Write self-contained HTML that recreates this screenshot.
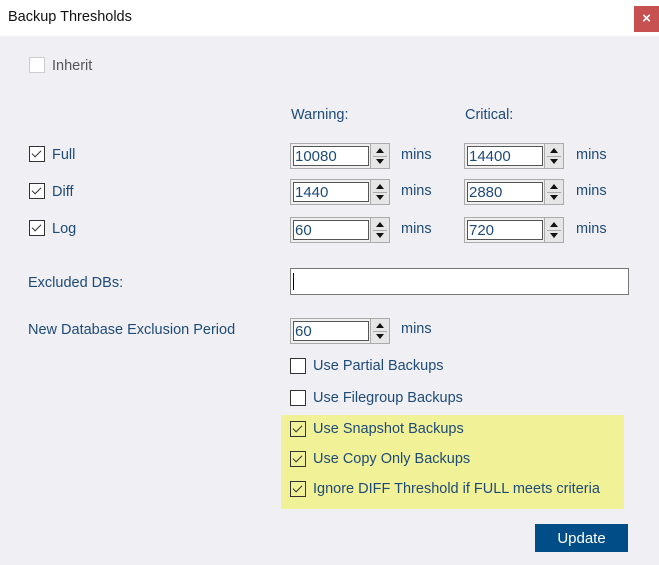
<!DOCTYPE html>
<html><head><style>
body{margin:0;width:659px;height:565px;background:#f0f0f4;font-family:"Liberation Sans",sans-serif;font-size:14.5px;color:#1e4a78;position:relative;overflow:hidden}
.a{position:absolute;white-space:nowrap}
.cb{position:absolute;width:14px;height:14px;border:1px solid #333;background:#fff}
.cb.c::after{content:"";position:absolute;left:4px;top:1px;width:4px;height:8px;border:solid #333;border-width:0 1.5px 1.5px 0;transform:rotate(45deg)}
.in{position:absolute;width:79px;height:24px;border:1px solid #aaa;background:#f0f0f0}
.in div{position:absolute;left:2px;top:2px;width:73px;height:18px;border:1px solid #555;background:#fff;color:#1e4a78;font-size:15px;line-height:19px;padding-left:1px;box-sizing:content-box}
.sp{position:absolute;width:18px;height:24px;border:1px solid #aaa;background:#e6e6e6}
.sp::before{content:"";position:absolute;left:5px;top:4px;border:4px solid transparent;border-bottom:5px solid #111;border-top:0}
.sp::after{content:"";position:absolute;left:5px;top:15px;border:4px solid transparent;border-top:5px solid #111;border-bottom:0}
.sp i{position:absolute;left:2px;right:2px;top:12px;height:1px;background:#aaa}
</style></head><body>
<div class="a" style="left:0;top:0;width:659px;height:36px;background:#fff"></div>
<div class="a" style="left:8px;top:9px;color:#111;font-size:14.5px">Backup Thresholds</div>
<div class="a" style="left:634px;top:6px;width:25px;height:26px;background:#c75050;color:#fff;text-align:center;line-height:25px;font-size:15px;font-weight:bold">×</div>

<div class="cb" style="left:29px;top:57px;border-color:#ccc"></div>
<div class="a" style="left:52px;top:58px;color:#555">Inherit</div>

<div class="a" style="left:291px;top:107px">Warning:</div>
<div class="a" style="left:465px;top:107px">Critical:</div>

<div class="cb c" style="left:29px;top:146px"></div><div class="a" style="left:52px;top:147px">Full</div>
<div class="cb c" style="left:29px;top:183px"></div><div class="a" style="left:52px;top:184px">Diff</div>
<div class="cb c" style="left:29px;top:220px"></div><div class="a" style="left:52px;top:221px">Log</div>

<div class="in" style="left:290px;top:143px"><div>10080</div></div><div class="sp" style="left:370px;top:143px"><i></i></div><div class="a" style="left:401px;top:147px">mins</div>
<div class="in" style="left:464px;top:143px"><div>14400</div></div><div class="sp" style="left:544px;top:143px"><i></i></div><div class="a" style="left:576px;top:147px">mins</div>
<div class="in" style="left:290px;top:179px"><div>1440</div></div><div class="sp" style="left:370px;top:179px"><i></i></div><div class="a" style="left:401px;top:183px">mins</div>
<div class="in" style="left:464px;top:179px"><div>2880</div></div><div class="sp" style="left:544px;top:179px"><i></i></div><div class="a" style="left:576px;top:183px">mins</div>
<div class="in" style="left:290px;top:217px"><div>60</div></div><div class="sp" style="left:370px;top:217px"><i></i></div><div class="a" style="left:401px;top:221px">mins</div>
<div class="in" style="left:464px;top:217px"><div>720</div></div><div class="sp" style="left:544px;top:217px"><i></i></div><div class="a" style="left:576px;top:221px">mins</div>

<div class="a" style="left:28px;top:275px">Excluded DBs:</div>
<div class="a" style="left:290px;top:268px;width:337px;height:25px;border:1px solid #777;background:#fff"><div style="position:absolute;left:2px;top:4px;width:1px;height:17px;background:#000"></div></div>

<div class="a" style="left:28px;top:322px">New Database Exclusion Period</div>
<div class="in" style="left:290px;top:318px"><div>60</div></div><div class="sp" style="left:370px;top:318px"><i></i></div><div class="a" style="left:401px;top:321px">mins</div>

<div class="cb" style="left:290px;top:358px"></div><div class="a" style="left:313px;top:358px">Use Partial Backups</div>
<div class="cb" style="left:290px;top:390px"></div><div class="a" style="left:313px;top:390px">Use Filegroup Backups</div>

<div class="a" style="left:281px;top:415px;width:343px;height:94px;background:#f1f197"></div>
<div class="cb c" style="left:290px;top:421px;background:transparent"></div><div class="a" style="left:313px;top:421px">Use Snapshot Backups</div>
<div class="cb c" style="left:290px;top:451px;background:transparent"></div><div class="a" style="left:313px;top:451px">Use Copy Only Backups</div>
<div class="cb c" style="left:290px;top:481px;background:transparent"></div><div class="a" style="left:313px;top:481px">Ignore DIFF Threshold if FULL meets criteria</div>

<div class="a" style="left:535px;top:524px;width:93px;height:28px;background:#004d87;color:#fff;text-align:center;line-height:29px;font-size:15px">Update</div>
</body></html>
